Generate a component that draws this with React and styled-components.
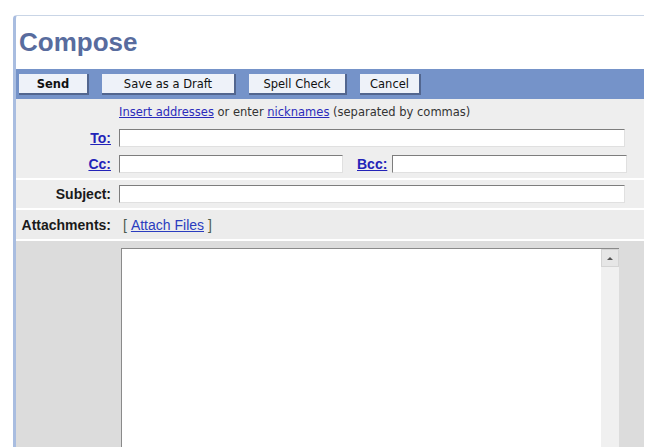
import styled, { createGlobalStyle } from "styled-components";

const GlobalStyle = createGlobalStyle`
  html, body {
    margin: 0;
    padding: 0;
    background: #ffffff;
    overflow: hidden;
  }
`;

const Panel = styled.div`
  margin: 15px 0 0 13px;
  width: 631px;
  box-sizing: border-box;
  border-left: 3px solid #a9bde0;
  border-top: 1px solid #c9d5e6;
  border-top-left-radius: 4px;
  font-family: "Liberation Sans", Arial, sans-serif;
`;

const TitleBar = styled.div`
  height: 53px;
  display: flex;
  align-items: center;
  padding-left: 3px;
`;

const Title = styled.h1`
  margin: 0;
  font-size: 26px;
  font-weight: bold;
  color: #586c9e;
`;

const Toolbar = styled.div`
  height: 30px;
  background: #7593c9;
  display: flex;
  align-items: center;
  gap: 13px;
  padding-left: 3px;
  box-sizing: border-box;
`;

const ToolButton = styled.button`
  width: ${(p) => p.$w}px;
  height: 21px;
  box-sizing: border-box;
  padding: 0;
  background: #eef2f9;
  border: none;
  border-right: 2px solid #52668f;
  border-bottom: 2px solid #52668f;
  font-family: "DejaVu Sans", Verdana, sans-serif;
  font-size: 11.5px;
  font-weight: ${(p) => (p.$bold ? "bold" : "normal")};
  color: #111;
  margin-top: 1px;
`;

const AddressBlock = styled.div`
  background: #eeeeee;
  padding-bottom: 5px;
  display: flex;
  flex-direction: column;
  gap: 8px;
`;

const Hint = styled.div`
  height: 26px;
  line-height: 27px;
  padding-left: 103px;
  margin-bottom: -4px;
  font-family: "DejaVu Sans", Verdana, sans-serif;
  font-size: 11.5px;
  color: #333;
`;

const HintLink = styled.a`
  color: #2b2bbb;
  text-decoration: underline;
`;

const FieldRow = styled.div`
  display: flex;
  align-items: center;
  height: ${(p) => (p.$h ? `${p.$h}px` : "auto")};
  padding: ${(p) => p.$pad || "0"};
  background: ${(p) => p.$bg || "transparent"};
  border-top: ${(p) => (p.$sep ? "2px solid #ffffff" : "none")};
`;

const Label = styled.div`
  width: 95px;
  margin-right: 8px;
  text-align: right;
  font-size: 14px;
  font-weight: bold;
  color: #1a1a1a;
  flex-shrink: 0;
`;

const WideLabel = styled(Label)`
  width: 104px;
  margin-left: -9px;
`;

const SideLabel = styled.div`
  margin: 0 5px 0 14px;
  font-size: 14px;
  font-weight: bold;
`;

const LabelLink = styled.a`
  color: #2323b8;
  text-decoration: underline;
`;

const Input = styled.input`
  width: ${(p) => p.$w}px;
  height: 18px;
  box-sizing: border-box;
  margin: 0;
  padding: 0 3px;
  background: #ffffff;
  border: 1px solid;
  border-color: #7d7d7d #e0e0e0 #e0e0e0 #7d7d7d;
  font-family: "Liberation Sans", Arial, sans-serif;
  font-size: 13px;
  outline: none;
`;

const AttachText = styled.div`
  font-size: 14px;
  color: #4d5c4d;
  margin-left: 4px;
`;

const AttachLink = styled.a`
  color: #2a3cbf;
  text-decoration: underline;
  margin: 0 4px;
`;

const Body = styled.div`
  background: #dcdcdc;
  border-top: 2px solid #ffffff;
  height: 215px;
  padding: 7px 0 0 105px;
  box-sizing: border-box;
`;

const Editor = styled.div`
  width: 498px;
  height: 220px;
  display: flex;
  background: #ffffff;
  border-top: 1px solid #8a8a8a;
  border-left: 1px solid #8a8a8a;
  box-sizing: border-box;
`;

const EditArea = styled.div`
  flex: 1;
`;

const ScrollTrack = styled.div`
  width: 18px;
  background: #f0f0f0;
  display: flex;
  flex-direction: column;
`;

const ScrollButton = styled.div`
  height: 18px;
  background: #e6e6e6;
  border: 1px solid #d4d4d4;
  box-sizing: border-box;
  display: flex;
  align-items: center;
  justify-content: center;
`;

const Arrow = styled.div`
  width: 0;
  height: 0;
  border-left: 3px solid transparent;
  border-right: 3px solid transparent;
  border-bottom: 3px solid #555;
`;

export default function App() {
  return (
    <>
      <GlobalStyle />
      <Panel>
        <TitleBar>
          <Title>Compose</Title>
        </TitleBar>
        <Toolbar>
          <ToolButton $w={70} $bold>Send</ToolButton>
          <ToolButton $w={134}>Save as a Draft</ToolButton>
          <ToolButton $w={98}>Spell Check</ToolButton>
          <ToolButton $w={61}>Cancel</ToolButton>
        </Toolbar>
        <AddressBlock>
          <Hint>
            <HintLink href="#">Insert addresses</HintLink> or enter{" "}
            <HintLink href="#">nicknames</HintLink> (separated by commas)
          </Hint>
          <FieldRow>
            <Label>
              <LabelLink href="#">To:</LabelLink>
            </Label>
            <Input $w={506} />
          </FieldRow>
          <FieldRow>
            <Label>
              <LabelLink href="#">Cc:</LabelLink>
            </Label>
            <Input $w={224} />
            <SideLabel>
              <LabelLink href="#">Bcc:</LabelLink>
            </SideLabel>
            <Input $w={235} />
          </FieldRow>
        </AddressBlock>
        <FieldRow $sep $bg="#eeeeee" $pad="5px 0">
          <Label>Subject:</Label>
          <Input $w={506} />
        </FieldRow>
        <FieldRow $sep $bg="#ececec" $h={29}>
          <WideLabel>Attachments:</WideLabel>
          <AttachText>
            [<AttachLink href="#">Attach Files</AttachLink>]
          </AttachText>
        </FieldRow>
        <Body>
          <Editor>
            <EditArea />
            <ScrollTrack>
              <ScrollButton>
                <Arrow />
              </ScrollButton>
            </ScrollTrack>
          </Editor>
        </Body>
      </Panel>
    </>
  );
}
